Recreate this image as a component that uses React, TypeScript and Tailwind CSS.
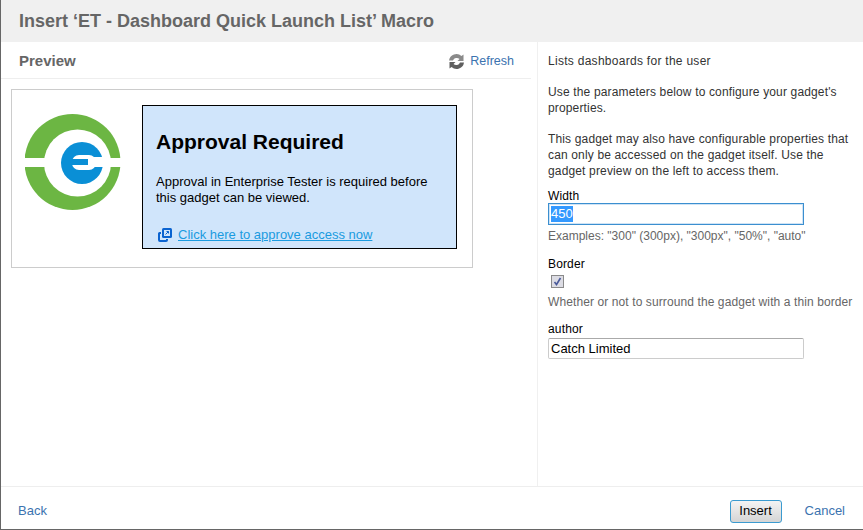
import React from 'react';

function Logo() {
    return (
        <svg width="96" height="97" viewBox="0 0 96 97" className="shrink-0">
            <circle cx="47.5" cy="48" r="48" fill="#6CB643" />
            <circle cx="52.5" cy="49" r="33.5" fill="#ffffff" />
            <rect x="0" y="44" width="96" height="9" fill="#ffffff" />
            <circle cx="57" cy="49" r="21" fill="#0A8FD6" />
            <rect x="47" y="41" width="24" height="15" rx="7" fill="#ffffff" />
            <rect x="62" y="43" width="20" height="10" fill="#ffffff" />
            <rect x="46" y="45" width="17" height="6" fill="#0A8FD6" />
        </svg>
    );
}

function RefreshIcon() {
    return (
        <svg width="17" height="17" viewBox="0 0 17 17">
            <path d="M1 7.5 A7.5 7.5 0 0 1 13.5 3 L15.5 1.5 L15.5 8 L9.5 8 L11.5 6 A4 4 0 0 0 5 7.5 Z" fill="#8a8a8a" />
            <path d="M16 9.5 A7.5 7.5 0 0 1 3.5 14 L1.5 15.5 L1.5 9 L7.5 9 L5.5 11 A4 4 0 0 0 12 9.5 Z" fill="#5f5f5f" />
        </svg>
    );
}

function LinkIcon() {
    return (
        <svg width="14" height="14" viewBox="0 0 14 14" className="shrink-0">
            <rect x="4" y="0" width="10" height="10" rx="1.5" fill="#0B63D0" />
            <rect x="6" y="2" width="6" height="6" fill="#d0e5fb" />
            <path d="M7.5 6.5 L10.5 3.5 M8.5 3.5 H10.5 V5.5" stroke="#0B63D0" strokeWidth="1" fill="none" />
            <path d="M3 4 H1.5 A1.5 1.5 0 0 0 0 5.5 V12 A2 2 0 0 0 2 14 H8 A2 2 0 0 0 10 12 V11 H8 V12 H2 V6 H3 Z" fill="#0B63D0" />
        </svg>
    );
}

export default function App() {
    return (
        <div className="w-[863px] h-[530px] flex flex-col bg-white border-l border-b border-[#666666] overflow-hidden text-[12px] leading-[16px] text-[#333333] font-['Liberation_Sans',Arial,sans-serif]">

            {/* Title */}
            <div className="h-[42px] shrink-0 bg-[#f0f0f0] flex items-center pl-[18px]">
                <h1 className="text-[18px] font-bold text-[#666666]">Insert ‘ET - Dashboard Quick Launch List’ Macro</h1>
            </div>

            <div className="flex-1 flex min-h-0">
                {/* Preview column */}
                <div className="w-[537px] shrink-0 border-r border-[#f0f0f0] pr-[6px]">
                    <div className="h-[37px] pt-[2px] flex items-center justify-between border-b border-[#eeeeee] pl-[18px] pr-[17px]">
                        <span className="text-[15px] font-bold text-[#666666]">Preview</span>
                        <a className="flex items-center gap-[5px] text-[#3b73af] text-[12.5px]">
                            <RefreshIcon />
                            <span>Refresh</span>
                        </a>
                    </div>
                    <div className="ml-[10px] mt-[10px] w-[462px] h-[179px] border border-[#cccccc] flex pl-[13px] pt-[15px]">
                        <div className="pt-[9px]"><Logo /></div>
                        <div className="ml-[21px] w-[315px] h-[144px] border border-black bg-[#d0e5fb] px-[13px] text-black">
                            <h2 className="mt-[23px] text-[21px] leading-[26px] font-bold">Approval Required</h2>
                            <p className="mt-[19px] text-[13px] w-[280px]">Approval in Enterprise Tester is required before this gadget can be viewed.</p>
                            <div className="mt-[21px] flex items-center gap-[6px] pl-[2px]">
                                <LinkIcon />
                                <a className="text-[#1a9be0] underline text-[13px]">Click here to approve access now</a>
                            </div>
                        </div>
                    </div>
                </div>

                {/* Parameters column */}
                <div className="flex-1 pl-[10px] pt-[11px] tracking-[0.15px]">
                    <p className="tracking-[0.28px]">Lists dashboards for the user</p>
                    <p className="mt-[15px] w-[300px]">Use the parameters below to configure your gadget's properties.</p>
                    <p className="mt-[15px] w-[305px]">This gadget may also have configurable properties that can only be accessed on the gadget itself. Use the gadget preview on the left to access them.</p>

                    <label className="block mt-[9px] text-black">Width</label>
                    <div className="-mt-px w-[256px] h-[22px] border border-[#3b8fd0] shadow-[inset_0_0_0_1px_#cfe3f5] flex items-center pl-[2px] text-[13px] tracking-normal">
                        <span className="bg-[#3399ff] text-white">450</span>
                    </div>
                    <p className="mt-[3px] text-[#666666] tracking-normal">Examples: "300" (300px), "300px", "50%", "auto"</p>

                    <label className="block mt-[12px] text-black">Border</label>
                    <div className="mt-[3px] ml-[3px] w-[13px] h-[13px] border border-[#8a8a8a] bg-[#dcdce4] flex items-center justify-center">
                        <svg width="9" height="9" viewBox="0 0 9 9">
                            <path d="M1.5 5 L3.5 7.5 L7.5 1" stroke="#4a5a9a" strokeWidth="1.6" fill="none" />
                        </svg>
                    </div>
                    <p className="mt-[6px] text-[#666666] whitespace-nowrap tracking-[0.1px]">Whether or not to surround the gadget with a thin border</p>

                    <label className="block mt-[11px] text-black">author</label>
                    <div className="mt-px w-[256px] h-[21px] border border-[#cccccc] border-t-[#aaaaaa] rounded-[2px] flex items-center pl-[2px] text-black text-[13px] tracking-normal">Catch Limited</div>
                </div>
            </div>

            {/* Footer */}
            <div className="h-[43px] shrink-0 border-t border-[#eeeeee] pt-[6px] flex items-center justify-between pl-[17px] pr-[18px] text-[#3b73af] text-[13px]">
                <a>Back</a>
                <div className="flex items-center gap-[23px]">
                    <button className="w-[52px] h-[23px] rounded-[3px] border border-[#3b9bd0] bg-gradient-to-b from-[#f4f4f4] to-[#d4d4d4] text-black text-[13px]">Insert</button>
                    <a>Cancel</a>
                </div>
            </div>
        </div>
    );
}
